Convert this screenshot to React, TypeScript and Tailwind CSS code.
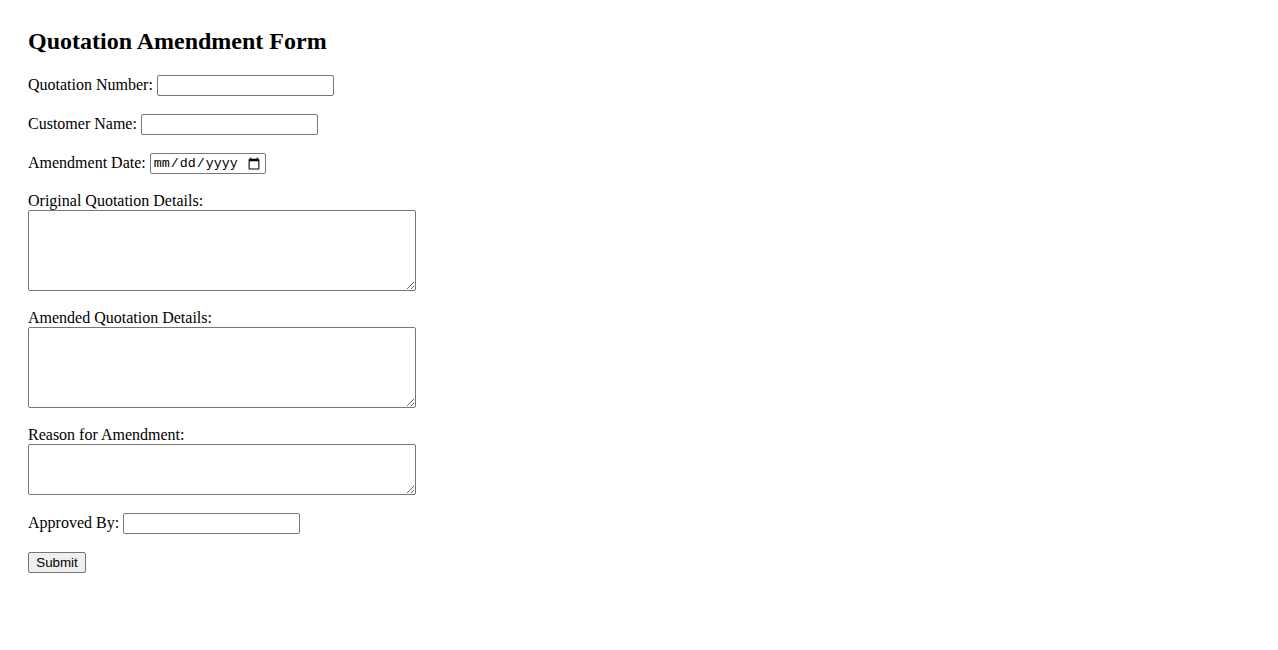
import React from "react";

function TextRow({ label, width = "w-[177px]" }: { label: string; width?: string }) {
  return (
    <div className="flex items-start gap-[4px]">
      <label className="leading-[18px] pt-[1px]">{label}</label>
      <input
        type="text"
        className={`${width} h-[21px] border border-[#767676] rounded-[2px] px-[2px] text-[13.33px] font-['Liberation_Sans'] bg-white outline-none`}
      />
    </div>
  );
}

function AreaRow({ label, height }: { label: string; height: string }) {
  return (
    <div className="flex flex-col items-start">
      <label className="leading-[18px]">{label}</label>
      <textarea
        className={`w-[388px] ${height} border border-[#767676] rounded-[2px] px-[2px] text-[13.33px] font-['Liberation_Mono'] bg-white outline-none`}
      />
    </div>
  );
}

export default function App() {
  return (
    <div className="min-h-screen bg-white px-[28px] pt-[27px] font-['Liberation_Serif',_serif] text-[16px] text-black">
      <h2 className="text-[24px] font-bold leading-[28px] mb-[20px]">Quotation Amendment Form</h2>
      <form className="flex flex-col items-start gap-[18px]" onSubmit={(e) => e.preventDefault()}>
        <TextRow label="Quotation Number:" />
        <TextRow label="Customer Name:" />
        <div className="flex items-start gap-[4px]">
          <label className="leading-[18px] pt-[1px]">Amendment Date:</label>
          <input
            type="date"
            className="w-[116px] h-[21px] border border-[#767676] rounded-[2px] px-[2px] text-[13.33px] font-['Liberation_Mono',_monospace] bg-white outline-none"
          />
        </div>
        <AreaRow label="Original Quotation Details:" height="h-[81px]" />
        <AreaRow label="Amended Quotation Details:" height="h-[81px]" />
        <AreaRow label="Reason for Amendment:" height="h-[51px]" />
        <TextRow label="Approved By:" />
        <button
          type="submit"
          className="w-[58px] h-[21px] border border-[#767676] rounded-[2px] bg-[#efefef] text-[13.33px] font-['Liberation_Sans',_sans-serif] leading-none"
        >
          Submit
        </button>
      </form>
    </div>
  );
}
